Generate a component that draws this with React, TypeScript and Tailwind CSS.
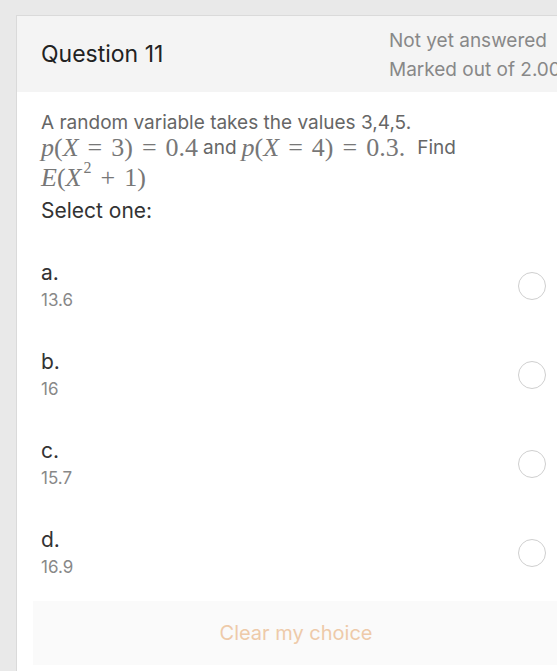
const sans = { fontFamily: "Inter, 'Liberation Sans', sans-serif" };

function M({ children }: { children: React.ReactNode }) {
  return <span className="italic">{children}</span>;
}

function Eq() {
  return <span className="mx-[9px]">=</span>;
}

function MathP({ n, v }: { n: string; v: string }) {
  return (
    <span className="font-['Liberation_Serif',serif] text-[26px] text-[#777]">
      <M>p</M>(<M>X</M>
      <Eq />
      {n})<Eq />
      {v}
    </span>
  );
}

function Option({ letter, value }: { letter: string; value: string }) {
  return (
    <div className="flex h-[54px] w-[505px] items-center justify-between">
      <div>
        <div className="h-[28px] text-[21px] leading-[28px] text-[#333]">{letter}</div>
        <div className="h-[26px] text-[17px] leading-[26px] text-[#888]">{value}</div>
      </div>
      <div className="h-[28px] w-[28px] rounded-full border-[1.5px] border-[#cfcfcf] bg-white" />
    </div>
  );
}

export default function App() {
  const options = [
    ["a.", "13.6"],
    ["b.", "16"],
    ["c.", "15.7"],
    ["d.", "16.9"],
  ];

  return (
    <div className="h-[671px] w-[557px] overflow-hidden bg-[#e9e9e9] pl-[16px] pt-[15px]" style={sans}>
      <div className="h-[700px] w-[600px] border-l border-t border-[#dadada] bg-white">
        <div className="flex h-[76px] bg-[#f4f4f4] pl-[24px]">
          <div className="flex w-[348px] items-center text-[23px] text-[#222]">Question 11</div>
          <div className="whitespace-nowrap pt-[10px] text-[19px] leading-[29px] text-[#888]">
            <div>Not yet answered</div>
            <div>Marked out of 2.00</div>
          </div>
        </div>

        <div className="pl-[24px] pt-[18px]">
          <div className="h-[26px] text-[19px] leading-[26px] text-[#666]">
            A random variable takes the values 3,4,5.
          </div>
          <div className="flex h-[24px] items-center whitespace-nowrap text-[19px] leading-[24px] text-[#666]">
            <MathP n="3" v="0.4" />
            <span className="mx-[5px]">and</span>
            <MathP n="4" v="0.3." />
            <span className="ml-[12px]">Find</span>
          </div>
          <div className="flex h-[34px] items-center font-['Liberation_Serif',serif] text-[26px] text-[#777]">
            <M>E</M>(<M>X</M>
            <span className="relative -top-[9px] ml-[2px] text-[16px]">2</span>
            <span className="mx-[9px]">+</span>1)
          </div>
          <div className="h-[34px] text-[21px] leading-[34px] text-[#333]">Select one:</div>

          <div className="mt-[31px] flex flex-col gap-[35px]">
            {options.map(([l, v]) => (
              <Option key={l} letter={l} value={v} />
            ))}
          </div>
        </div>

        <div className="ml-[16px] mt-[21px] flex h-[64px] w-[526px] items-center justify-center bg-[#fafafa] text-[20px] text-[#eecaa9]">
          Clear my choice
        </div>
      </div>
    </div>
  );
}
